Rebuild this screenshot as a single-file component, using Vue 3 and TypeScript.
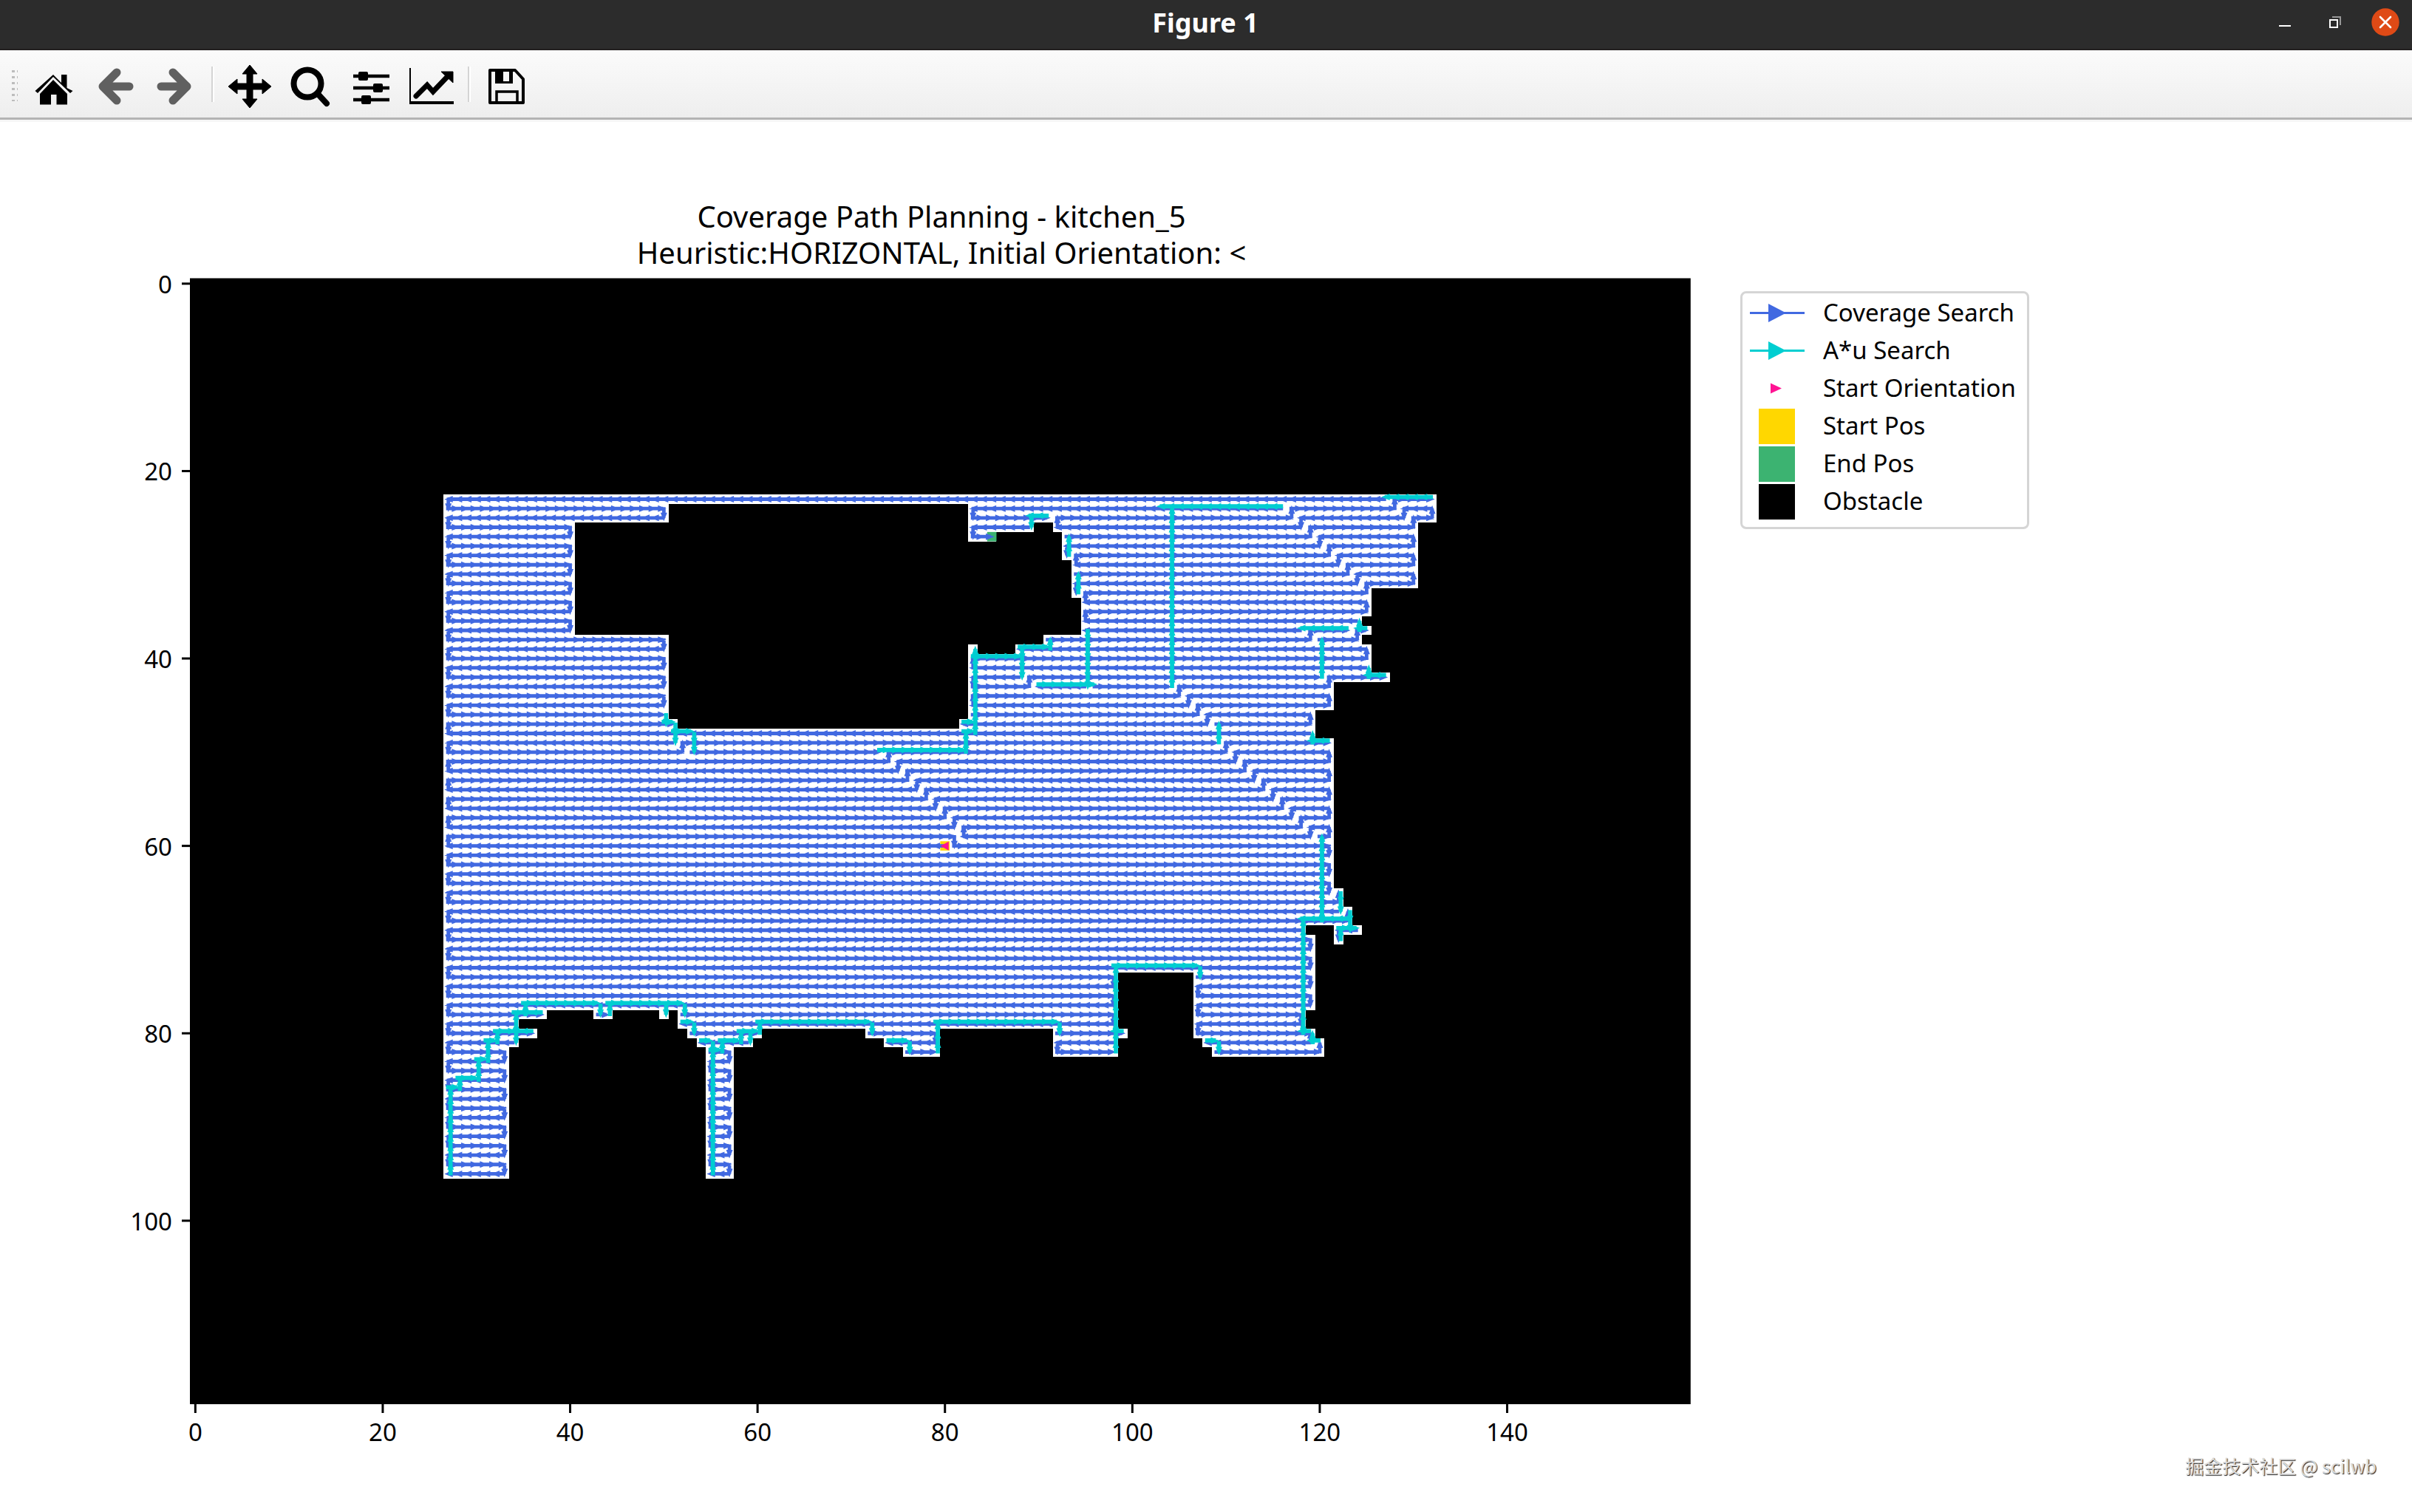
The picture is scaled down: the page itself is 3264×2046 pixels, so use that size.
<script setup lang="ts">
interface Rect { x: number; y: number; w: number; h: number }
interface Tick { value: number; at: number }
type Point = [number, number]

const CELL = 12.68
const LEFT = 258
const TOP = 377.5
const COLS = 160
const ROWS = 120

const cx = (col: number): number => LEFT + (col + 0.5) * CELL
const cy = (row: number): number => TOP + (row + 0.5) * CELL

const plot: Rect = { x: LEFT - 1, y: TOP - 1, w: COLS * CELL + 2, h: ROWS * CELL + 2 }

// Free floor: "first row-last row: first col-last col ..."
const floor: string[] = [
  '23-23: 27-132',
  '24-25: 27-50 83-132',
  '26-26: 27-40 83-89 92-130',
  '27-27: 27-40 83-85 93-130',
  '28-29: 27-40 93-130',
  '30-32: 27-40 94-130',
  '33-33: 27-40 94-125',
  '34-35: 27-40 95-125',
  '36-36: 27-40 95-124',
  '37-37: 27-40 95-125',
  '38-38: 27-50 91-124',
  '39-39: 27-50 83-83 88-125',
  '40-41: 27-50 83-125',
  '42-42: 27-50 83-127',
  '43-45: 27-50 83-121',
  '46-46: 27-50 83-119',
  '47-47: 27-51 82-119',
  '48-48: 27-119',
  '49-64: 27-121',
  '65-66: 27-122',
  '67-68: 27-123',
  '69-69: 27-118 122-124',
  '70-70: 27-119 122-122',
  '71-73: 27-119',
  '74-77: 27-98 107-119',
  '78-78: 27-37 43-44 50-50 52-98 107-118',
  '79-79: 27-34 52-98 107-118',
  '80-80: 27-36 53-60 72-79 92-99 107-119',
  '81-81: 27-34 54-59 74-79 92-98 108-120',
  '82-82: 27-33 55-57 76-79 92-98 109-120',
  '83-95: 27-33 55-57',
]

const floorRects: Rect[] = floor.flatMap((line) => {
  const [rows, spans] = line.split(': ')
  const [r0, r1] = rows.split('-').map(Number)
  return spans.split(' ').map((span) => {
    const [c0, c1] = span.split('-').map(Number)
    return { x: LEFT + c0 * CELL, y: TOP + r0 * CELL, w: (c1 - c0 + 1) * CELL, h: (r1 - r0 + 1) * CELL }
  })
})

// Horizontal sweeps of the coverage search, by row: "from>to ..."
const sweeps: Record<number, string> = {
  23: '127>27 128>132',
  24: '27>50 116>83 117>128 132>129',
  25: '50>27 83>91 92>117 129>118 130>132',
  26: '27>40 89>83 118>92 119>130',
  27: '40>27 83>85 93>119 130>120',
  28: '27>40 120>93 121>130',
  29: '40>27 94>121 130>122',
  30: '27>40 122>94 123>130',
  31: '40>27 94>123 130>124',
  32: '27>40 124>94 125>130',
  33: '40>27 95>125',
  34: '27>40 125>95',
  35: '40>27 95>125',
  36: '27>40 124>95',
  37: '40>27 118>95 119>123 124>125',
  38: '27>50 91>119 120>124',
  39: '50>27 125>88',
  40: '27>50 83>125',
  41: '50>27 125>83',
  42: '27>50 88>83 89>120 121>127',
  43: '50>27 83>89 95>90 96>104 105>121',
  44: '27>50 83>105 121>106',
  45: '50>27 106>83 107>121',
  46: '27>50 83>107 119>108',
  47: '27>51 108>82 109>119',
  48: '119>27',
  49: '51>27 52>109 110>121',
  50: '27>52 53>73 74>110 121>111',
  51: '27>74 111>75 112>121',
  52: '75>27 76>112 121>113',
  53: '27>76 113>77 114>121',
  54: '77>27 78>114 121>115',
  55: '27>78 115>79 116>121',
  56: '79>27 80>116 121>117',
  57: '27>80 117>81 118>121',
  58: '81>27 82>118 121>119',
  59: '27>81 119>82 120>121',
  60: '80>27 81>121',
  61: '121>27', 62: '27>121', 63: '121>27', 64: '27>121', 65: '121>27',
  66: '27>122', 67: '122>27', 68: '27>123',
  69: '118>27 124>122',
  70: '27>119', 71: '119>27', 72: '27>119', 73: '119>27',
  74: '27>98 107>119',
  75: '98>27 119>107',
  76: '27>98 107>119',
  77: '98>27 119>107',
  78: '27>37 43>44 52>98 107>118',
  79: '98>52 34>27 118>107',
  80: '27>36 53>60 72>79 92>99 107>119',
  81: '34>27 59>54 79>74 98>92 119>108',
  82: '27>33 55>57 76>79 92>98 109>120',
}
for (let row = 83; row <= 95; row++) sweeps[row] = row % 2 ? '33>27 57>55' : '27>33 55>57'

// Turns between neighbouring rows, by column: "from>to ..."
const turns: [number, string][] = [
  [27, '23>24 25>26 27>28 29>30 31>32 33>34 35>36 37>38 39>40 41>42 43>44 45>46 48>47 49>50 52>51 54>53 56>55 58>57 60>59 61>62 63>64 65>66 67>68 69>70 71>72 73>74 75>76 77>78 79>80 81>82 83>84 85>86 87>88 89>90 91>92 93>94'],
  [33, '82>83 84>85 86>87 88>89 90>91 92>93 94>95'],
  [40, '26>27 28>29 30>31 32>33 34>35 36>37'],
  [50, '24>25 38>39 40>41 42>43 44>45'],
  [52, '50>49'],
  [55, '83>84 85>86 87>88 89>90 91>92 93>94'],
  [57, '82>83 84>85 86>87 88>89 90>91 92>93 94>95'],
  [74, '51>50'], [75, '51>52'], [76, '53>52'], [77, '53>54'], [78, '55>54'],
  [79, '55>56 80>81'], [80, '57>56'], [81, '57>58 59>60'], [82, '59>58'],
  [83, '24>25 26>27 41>40 42>43 45>44'],
  [89, '43>42'],
  [92, '26>25 81>82'],
  [93, '28>29'],
  [94, '30>29 32>33'],
  [95, '34>33 36>35'],
  [98, '74>75 76>77 78>79'],
  [105, '44>43'], [106, '44>45'],
  [107, '46>45 75>76 77>78 79>80'],
  [108, '46>47'], [110, '50>49'], [111, '50>51'], [112, '52>51'], [113, '52>53'],
  [114, '54>53'], [115, '54>55'], [116, '56>55'],
  [117, '25>24 56>57'],
  [118, '25>26 58>57 78>79'],
  [119, '27>26 38>37 47>46 58>59 70>71 72>73 74>75 76>77 81>80'],
  [120, '27>28 82>81'],
  [121, '29>28 43>42 45>44 51>50 53>52 55>54 57>56 59>58 60>61 62>63 64>65'],
  [122, '29>30 66>65 69>70'],
  [123, '31>30 68>67'],
  [124, '31>32 38>37'],
  [125, '33>32 35>34 40>39'],
  [128, '24>23'], [129, '24>25'],
  [130, '26>25 28>27 30>29 32>31'],
  [132, '25>24'],
]

// Corner points of each A* relocation, as "col,row"
const relocations: string[] = [
  '132,23 127,23',
  '116,24 103,24',
  '104,43 104,24',
  '91,25 89,25 89,26',
  '93,29 93,27',
  '94,33 94,31',
  '125,37 124,37 124,36',
  '123,37 118,37',
  '120,42 120,38',
  '127,42 125,42 125,41',
  '95,37 95,43',
  '90,43 96,43',
  '88,39 91,39 91,38',
  '88,39 88,42',
  '83,48 83,39',
  '83,40 88,40',
  '82,47 83,47',
  '73,50 82,50 82,48 83,48',
  '50,46 50,47 51,47 51,49',
  '51,48 53,48 53,50',
  '109,49 109,47',
  '121,49 119,49 119,48',
  '120,68 120,59',
  '122,65 122,67',
  '123,67 123,69 124,69',
  '122,70 122,69 124,69',
  '123,68 118,68',
  '120,81 119,81 119,80 118,80 118,68',
  '108,81 109,81 109,82',
  '98,82 98,73 107,73 107,74',
  '99,80 98,80',
  '79,82 79,79 92,79 92,80',
  '74,81 76,81 76,82',
  '55,95 55,82 56,82 56,81 58,81 58,80 60,80 60,79 72,79 72,80',
  '54,81 55,81 55,82',
  '59,80 59,81',
  '52,79 53,79 53,80',
  '44,78 44,77 52,77 52,78',
  '50,77 50,78',
  '27,95 27,86 28,86 28,85 30,85 30,83 31,83 31,81 32,81 32,80 34,80 34,78 35,78 35,77 43,77 43,78',
  '37,78 34,78',
  '34,79 34,81',
  '36,80 34,80',
]

// Relocations run beside the coverage lines: above horizontal ones, right of vertical ones
const ASTAR_SHIFT = 3

// One arrow per grid step: a shaft with a head that overshoots the target cell a little
function trace(points: Point[], shift: number, half: number): string {
  let d = ''
  for (let i = 1; i < points.length; i++) {
    const [c0, r0] = points[i - 1]
    const [c1, r1] = points[i]
    const ux = Math.sign(c1 - c0)
    const uy = Math.sign(r1 - r0)
    const dx = uy ? shift : -1
    const dy = ux ? -shift : 0
    const steps = Math.abs(c1 - c0) + Math.abs(r1 - r0)
    const x0 = cx(c0) + dx - ux * 2
    const y0 = cy(r0) + dy - uy * 2
    const x1 = cx(c1) + dx
    const y1 = cy(r1) + dy
    const nx = -uy * half
    const ny = ux * half
    d += `M${x0 + nx} ${y0 + ny}L${x0 - nx} ${y0 - ny}L${x1 - nx} ${y1 - ny}L${x1 + nx} ${y1 + ny}Z`
    for (let s = 1; s <= steps; s++) {
      const tx = cx(c0 + ux * s) + dx
      const ty = cy(r0 + uy * s) + dy
      const bx = tx - ux * 7
      const by = ty - uy * 7
      d += `M${bx - uy * 4.5} ${by + ux * 4.5}L${bx + uy * 4.5} ${by - ux * 4.5}L${tx + ux * 4.5} ${ty + uy * 4.5}Z`
    }
  }
  return d
}

const pairs = (text: string): number[][] => text.split(' ').map((p) => p.split('>').map(Number))

const coverage: string =
  Object.entries(sweeps)
    .map(([row, text]) => pairs(text).map(([a, b]) => trace([[a, +row], [b, +row]], 0, 2.4)).join(''))
    .join('') +
  turns
    .map(([col, text]) => pairs(text).map(([a, b]) => trace([[col, a], [col, b]], 0, 2.4)).join(''))
    .join('')

const astar: string = relocations
  .map((line) => trace(line.split(' ').map((p) => p.split(',').map(Number) as Point), ASTAR_SHIFT, 2.8))
  .join('')

const xTicks: Tick[] = [0, 20, 40, 60, 80, 100, 120, 140].map((value) => ({ value, at: cx(value) }))
const yTicks: Tick[] = [0, 20, 40, 60, 80, 100].map((value) => ({ value, at: cy(value) }))

const legend = [
  { label: 'Coverage Search', kind: 'line', color: '#4169e1' },
  { label: 'A*u Search', kind: 'line', color: '#00ced1' },
  { label: 'Start Orientation', kind: 'marker', color: '#ff1493' },
  { label: 'Start Pos', kind: 'patch', color: '#ffd700' },
  { label: 'End Pos', kind: 'patch', color: '#3cb371' },
  { label: 'Obstacle', kind: 'patch', color: '#000000' },
]
</script>

<template>
  <div class="window">
    <header class="titlebar">
      <h1 class="caption">Figure 1</h1>
      <div class="controls">
        <button type="button" aria-label="Minimize">
          <svg viewBox="0 0 40 40"><path d="M12 25h16" stroke="#fff" stroke-width="2" /></svg>
        </button>
        <button type="button" aria-label="Restore">
          <svg viewBox="0 0 40 40" fill="none" stroke-width="2">
            <path d="M16 13h11v11" stroke="#969696" />
            <path d="M13 17h10v10h-10z" stroke="#fff" />
          </svg>
        </button>
        <button type="button" aria-label="Close">
          <svg viewBox="0 0 40 40">
            <circle cx="20" cy="20" r="18.7" fill="#df4a16" />
            <path d="M13 13l14 14M27 13l-14 14" stroke="#fff" stroke-width="2.6" stroke-linecap="round" />
          </svg>
        </button>
      </div>
    </header>

    <nav class="toolbar" aria-label="Figure tools">
      <span class="grip"></span>
      <button type="button" aria-label="Home">
        <svg viewBox="0 0 60 60">
          <path d="M29 14L40 25V14h7.500v18L55.500 36 52 39 29 17 8 39 4.500 36Z" />
          <path d="M29 21L48 40V54.500H33.500V41h-7.500V54.500H11V40Z" />
        </svg>
      </button>
      <button type="button" aria-label="Back" disabled>
        <svg viewBox="0 0 60 60" fill="none" stroke="#606060" stroke-width="11" stroke-linecap="round" stroke-linejoin="round">
          <path d="M33 11L14 30l19 19M16 30h34" />
        </svg>
      </button>
      <button type="button" aria-label="Forward" disabled>
        <svg viewBox="0 0 60 60" fill="none" stroke="#606060" stroke-width="11" stroke-linecap="round" stroke-linejoin="round">
          <path d="M27 11L46 30 27 49M44 30H11" />
        </svg>
      </button>
      <span class="divider"></span>
      <button type="button" aria-label="Pan">
        <svg viewBox="0 0 60 60">
          <path d="M30 1L40 13H34V26H47V20L59 30 47 40V34H34V47H40L30 59 20 47H26V34H13V40L1 30 13 20V26H26V13H20Z" stroke="#000" stroke-linejoin="round" />
        </svg>
      </button>
      <button type="button" aria-label="Zoom">
        <svg viewBox="0 0 60 60" fill="none" stroke="#000">
          <circle cx="26" cy="26" r="18.500" stroke-width="8" />
          <path d="M40 40L52 53" stroke-width="8" stroke-linecap="round" />
        </svg>
      </button>
      <button type="button" aria-label="Configure subplots">
        <svg viewBox="0 0 60 60">
          <path d="M6 16h49M6 32h49M6 48h49" stroke="#000" stroke-width="4.500" />
          <rect x="13" y="10" width="13" height="12" rx="2" />
          <rect x="33" y="26" width="13" height="12" rx="2" />
          <rect x="17" y="42" width="13" height="12" rx="2" />
        </svg>
      </button>
      <button type="button" aria-label="Edit axes">
        <svg viewBox="0 0 60 60">
          <path d="M1 5V52" stroke="#000" stroke-width="2" />
          <path d="M0 52H60" stroke="#000" stroke-width="4" />
          <path d="M9 43L24 28 32 37 53 15" fill="none" stroke="#000" stroke-width="7" stroke-linecap="round" />
          <path d="M43 10H59V25Z" stroke="#000" stroke-linejoin="round" />
        </svg>
      </button>
      <span class="divider"></span>
      <button type="button" aria-label="Save">
        <svg viewBox="0 0 60 60">
          <path d="M8 8H42L53 20V52H8Z" fill="none" stroke="#000" stroke-width="4" stroke-linejoin="round" />
          <path fill-rule="evenodd" d="M15 8H39V26H15ZM26 10V23H34V10Z" />
          <path d="M17 52V37H45V52" fill="none" stroke="#000" stroke-width="3.500" />
        </svg>
      </button>
    </nav>

    <main>
      <figure class="figure">
        <svg class="chart" viewBox="0 165 2355 1805" role="img" aria-label="Coverage path plot">
          <g class="chart-title" text-anchor="middle">
            <text x="1274" y="308">Coverage Path Planning - kitchen_5</text>
            <text x="1274" y="357">Heuristic:HORIZONTAL, Initial Orientation: &lt;</text>
          </g>
          <rect :x="plot.x" :y="plot.y" :width="plot.w" :height="plot.h" />
          <g fill="#fff" shape-rendering="crispEdges">
            <rect v-for="(r, i) in floorRects" :key="i" :x="r.x" :y="r.y" :width="r.w" :height="r.h" />
          </g>
          <rect :x="cx(79.5)" :y="cy(59.5)" :width="CELL" :height="CELL" fill="#ffd700" />
          <rect :x="cx(84.5)" :y="cy(26.5)" :width="CELL" :height="CELL" fill="#3cb371" />
          <path :d="coverage" fill="#4169e1" />
          <path :d="astar" fill="#00ced1" />
          <path :d="`M${cx(80) - 6} ${cy(60)}l11 -6v12z`" fill="#ff1493" />
          <g class="ticks">
            <g v-for="t in yTicks" :key="'y' + t.value">
              <path :d="`M246 ${t.at}H258`" />
              <text x="233" :y="t.at + 13" text-anchor="end">{{ t.value }}</text>
            </g>
            <g v-for="t in xTicks" :key="'x' + t.value">
              <path :d="`M${t.at} 1900V1912`" />
              <text :x="t.at" y="1950" text-anchor="middle">{{ t.value }}</text>
            </g>
          </g>
        </svg>
        <div class="side">
          <ul class="legend">
            <li v-for="item in legend" :key="item.label">
              <svg viewBox="0 0 74 51" :fill="item.color" :stroke="item.color">
                <template v-if="item.kind === 'line'">
                  <path d="M0 25.500H74" stroke-width="3" />
                  <path d="M25 13V38L49 25.500Z" stroke="none" />
                </template>
                <path v-else-if="item.kind === 'marker'" d="M28 18.500V32.500L43 25.500Z" stroke="none" />
                <rect v-else x="12" y="2" width="49" height="48" stroke="none" />
              </svg>
              <span>{{ item.label }}</span>
            </li>
          </ul>
        </div>
      </figure>
    </main>
    <footer class="watermark">掘金技术社区 @ scilwb</footer>
  </div>
</template>

<style>
body {
  margin: 0;
  background: #fff;
}
</style>

<style scoped>
.window {
  font-family: "Noto Sans", "Noto Sans CJK SC", sans-serif;
  color: #000;
}
.titlebar {
  display: grid;
  grid-template-columns: 1fr auto 1fr;
  height: 68px;
  box-sizing: border-box;
  padding-right: 2px;
  background: #2c2c2c;
  border-bottom: 2px solid #232020;
}
.caption {
  grid-column: 2;
  margin: 0;
  font-size: 36px;
  line-height: 62px;
  font-weight: 700;
  color: #fff;
}
.controls {
  display: flex;
  justify-content: flex-end;
}
button {
  display: flex;
  align-items: center;
  justify-content: center;
  padding: 0;
  border: 0;
  background: none;
}
.controls button {
  width: 68px;
  height: 60px;
}
.controls svg {
  width: 40px;
  height: 40px;
}
.toolbar {
  display: flex;
  align-items: center;
  height: 91px;
  border-bottom: 3px solid #b4b4b4;
  background: linear-gradient(#fbfbfb, #eeeeee);
  box-shadow: 0 3px 0 #f6f6f6;
  margin-bottom: 3px;
}
.toolbar button {
  width: 82px;
  height: 82px;
}
.toolbar svg {
  width: 60px;
  height: 60px;
  margin-top: 6px;
}
.grip {
  width: 11px;
  height: 42px;
  margin: 4px 8px 0 13px;
  background: conic-gradient(from 90deg at 3px 3px, transparent 0 75%, #bdbdbd 0) 0 0 / 7px 8px;
}
.divider {
  width: 2px;
  height: 48px;
  margin: 0 7px 0 8px;
  background: #d4d4d4;
  border-right: 2px solid #fff;
}
.figure {
  display: flex;
  align-items: flex-start;
  margin: 0;
}
.chart {
  flex: 2355 1 0;
  min-width: 0;
  display: block;
}
.chart-title {
  font-size: 40px;
}
.ticks {
  font-size: 33px;
}
.ticks path {
  stroke: #000;
  stroke-width: 3;
}
.side {
  flex: 909 1 0;
  display: flex;
}
.legend {
  margin: 229px 0 0;
  padding: 1px 15px 9px 10px;
  border: 3px solid #d5d5d5;
  border-radius: 8px;
  list-style: none;
}
.legend li {
  display: flex;
  gap: 25px;
  height: 51px;
  font-size: 33px;
  line-height: 49px;
  white-space: nowrap;
}
.legend svg {
  width: 74px;
  height: 51px;
}
.watermark {
  padding: 0 48px 36px;
  text-align: right;
  font-family: "Noto Sans CJK SC", sans-serif;
  font-size: 25px;
  line-height: 26px;
  color: #dcdcdc;
  text-shadow: 1px 1px 1px #222;
}
</style>
